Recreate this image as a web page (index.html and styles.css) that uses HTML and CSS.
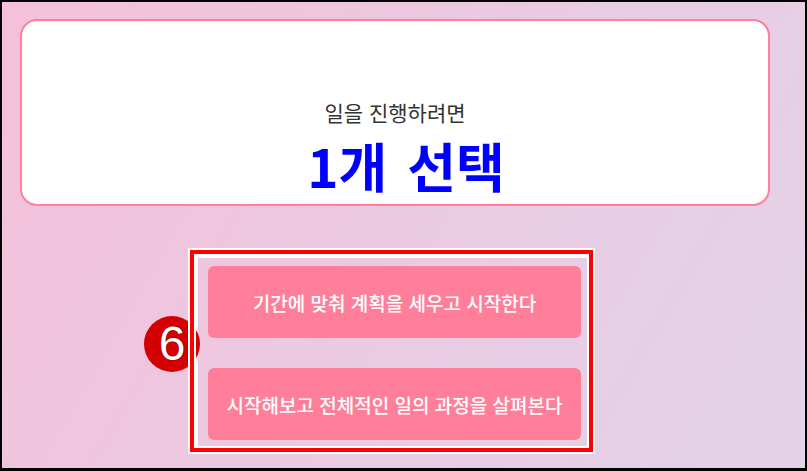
FILE: index.html
```html
<!DOCTYPE html>
<html lang="ko">
<head>
<meta charset="utf-8">
<title>일을 진행하려면</title>
<link rel="stylesheet" href="styles.css">
</head>
<body>
<div class="frame">
  <div class="page">
    <div class="column">
      <section class="card">
        <p class="card-sub">일을 진행하려면</p>
        <h1 class="card-title">1개 선택</h1>
      </section>
      <div class="choices">
        <div class="annotation"></div>
        <div class="badge">6</div>
        <button class="choice">기간에 맞춰 계획을 세우고 시작한다</button>
        <button class="choice">시작해보고 전체적인 일의 과정을 살펴본다</button>
      </div>
    </div>
  </div>
</div>
</body>
</html>
```

FILE: styles.css
```css
* { box-sizing: border-box; }
html, body { margin: 0; padding: 0; }
body {
  width: 807px;
  height: 471px;
  background: #000;
  font-family: "Noto Sans CJK KR", "Noto Sans", sans-serif;
  overflow: hidden;
}
.frame {
  padding: 2px 2px 3px 2px;
  height: 100%;
}
.page {
  height: 100%;
  background: linear-gradient(120deg, #f5c0da 0%, #ebc9e0 45%, #e3d3e8 100%);
  padding: 17px 35px 0 18px;
}
.column {
  display: flex;
  flex-direction: column;
  align-items: center;
}
.card {
  width: 100%;
  height: 187px;
  background: #fff;
  border: 2px solid #ff7f9d;
  border-radius: 17px;
  padding-top: 77px;
  text-align: center;
}
.card-sub {
  margin: 0;
  font-size: 21px;
  line-height: 28px;
  color: #333;
  font-weight: 400;
}
.card-title {
  margin: 8px 0 0;
  padding-left: 22px;
  font-size: 53px;
  line-height: 62px;
  font-weight: 700;
  color: #0000ff;
  word-spacing: 5px;
}
.choices {
  position: relative;
  margin-top: 50px;
  width: 394px;
  border: 2px solid #fff;
  padding: 8px 7px 8px 10px;
  display: flex;
  flex-direction: column;
  gap: 30px;
  transform: translateX(-2px);
}
.choice {
  display: block;
  width: 100%;
  height: 72px;
  border: 0;
  border-radius: 6px;
  background: #ff7f9b;
  color: #fff;
  font-family: inherit;
  font-size: 19px;
  font-weight: 500;
  padding: 0;
}
.annotation {
  position: absolute;
  left: -8px;
  top: -8px;
  right: -5px;
  bottom: -4px;
  border: 4px solid #ff0000;
  box-shadow: 0 0 0 2px #fff, inset 0 0 0 2px #fff;
  pointer-events: none;
  z-index: 2;
}
.badge {
  position: absolute;
  left: -54px;
  top: 58px;
  width: 56px;
  height: 56px;
  border-radius: 50%;
  background: #d40000;
  color: #fff;
  font-family: "Liberation Sans", Arial, sans-serif;
  font-size: 48px;
  line-height: 56px;
  text-align: center;
  -webkit-text-stroke: 1.5px #a00000;
  paint-order: stroke fill;
  z-index: 1;
}
```
